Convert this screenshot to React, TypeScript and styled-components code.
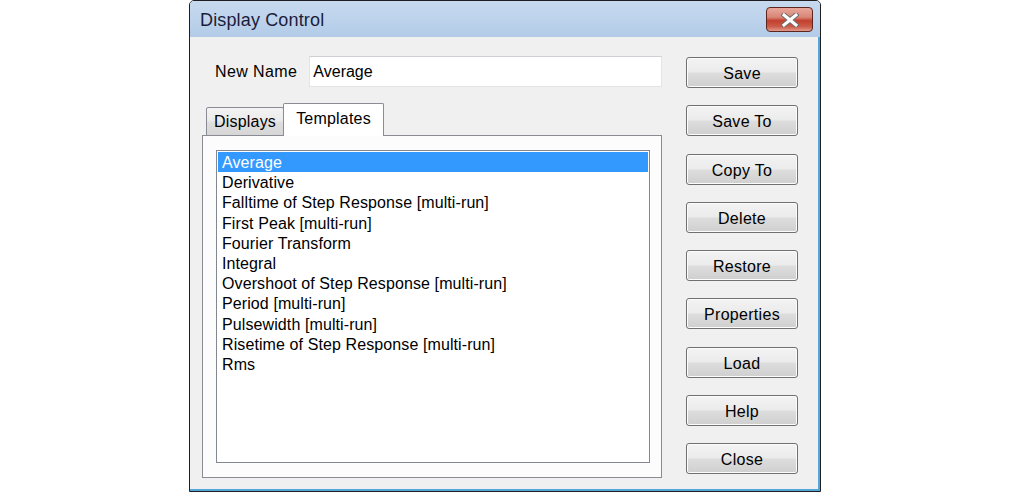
import styled, { createGlobalStyle } from 'styled-components'

const GlobalStyle = createGlobalStyle`
  html, body {
    margin: 0;
    padding: 0;
    background: #ffffff;
  }
  body {
    font-family: "Liberation Sans", Arial, sans-serif;
  }
`

const Page = styled.div`
  display: flex;
  justify-content: center;
`

const Window = styled.div`
  width: 632px;
  height: 492px;
  box-sizing: border-box;
  border: 1px solid #1f1f1f;
  border-radius: 5px 5px 0 0;
  display: flex;
  flex-direction: column;
  overflow: hidden;
  background: #f0f0f0;
`

const TitleBar = styled.div`
  height: 36px;
  flex: none;
  display: flex;
  align-items: center;
  justify-content: space-between;
  padding: 0 7px 0 10px;
  background: linear-gradient(180deg, #c6d9ee 0%, #bdd3ec 50%, #b3cbe7 100%);
`

const Title = styled.span`
  font-size: 18px;
  letter-spacing: 0.15px;
  color: #1c1c3a;
  padding-top: 2px;
`

const CloseButton = styled.div`
  width: 47px;
  height: 25px;
  box-sizing: border-box;
  border: 1px solid #5e241e;
  border-radius: 4px;
  background: linear-gradient(180deg, #e8a89c 0%, #d98676 40%, #c2402f 55%, #cc5a48 80%, #e19a8b 100%);
  display: flex;
  align-items: center;
  justify-content: center;
  margin-top: 1px;
`

const Body = styled.div`
  flex: 1;
  display: flex;
  gap: 24px;
  padding: 19px 20px 0 12px;
  border-right: 2px solid #54a6d8;
  border-bottom: 2px solid #54a6d8;
`

const LeftColumn = styled.div`
  width: 460px;
  display: flex;
  flex-direction: column;
`

const NameRow = styled.div`
  display: flex;
  align-items: center;
  gap: 12px;
  padding-left: 13px;
`

const Label = styled.span`
  font-size: 16px;
  letter-spacing: 0.4px;
  color: #000;
`

const TextInput = styled.div`
  flex: 1;
  height: 31px;
  box-sizing: border-box;
  background: #ffffff;
  border: 1px solid #e2e4e7;
  border-top-color: #cdd0d4;
  font-size: 16px;
  color: #000;
  padding: 0 3px;
  display: flex;
  align-items: center;
`

const TabRow = styled.div`
  display: flex;
  align-items: flex-end;
  margin-top: 16px;
  padding-left: 4px;
  position: relative;
  z-index: 1;
  margin-bottom: -1px;
`

const Tab = styled.div<{ $active?: boolean }>`
  box-sizing: border-box;
  font-size: 16px;
  letter-spacing: 0.2px;
  color: #000;
  display: flex;
  align-items: center;
  justify-content: center;
  border: 1px solid #898c95;
  border-radius: 2px 2px 0 0;
  ${(p) =>
    p.$active
      ? `
    height: 33px;
    width: 101px;
    background: #ffffff;
    border-bottom: none;
    margin-left: -1px;
    padding-bottom: 2px;
  `
      : `
    height: 29px;
    width: 78px;
    background: linear-gradient(180deg, #f3f3f3 0%, #ebebeb 45%, #dedede 55%, #d6d6d6 100%);
    padding-top: 0;
  `}
`

const TabPanel = styled.div`
  height: 343px;
  box-sizing: border-box;
  border: 1px solid #898c95;
  background: #fcfcfc;
  padding: 14px 11px 14px 13px;
  display: flex;
`

const ListBox = styled.div`
  flex: 1;
  box-sizing: border-box;
  border: 1px solid #828790;
  background: #ffffff;
  padding: 1px;
`

const ListItem = styled.div<{ $selected?: boolean }>`
  height: 20.2px;
  line-height: 22px;
  font-size: 16px;
  letter-spacing: 0.1px;
  padding-left: 4px;
  white-space: nowrap;
  overflow: hidden;
  color: ${(p) => (p.$selected ? '#ffffff' : '#000000')};
  background: ${(p) => (p.$selected ? '#3399ff' : 'transparent')};
`

const ButtonColumn = styled.div`
  width: 112px;
  display: flex;
  flex-direction: column;
  gap: 17.25px;
  padding-top: 1px;
`

const Button = styled.div`
  height: 31px;
  box-sizing: border-box;
  border: 1px solid #707070;
  border-radius: 3px;
  background: linear-gradient(180deg, #f3f3f3 0%, #ebebeb 48%, #dddddd 52%, #cfcfcf 100%);
  box-shadow: inset 0 0 0 1px #fcfcfc;
  font-size: 16px;
  letter-spacing: 0.3px;
  color: #000;
  display: flex;
  align-items: center;
  justify-content: center;
  padding-top: 3px;
`

const templates = [
  'Average',
  'Derivative',
  'Falltime of Step Response [multi-run]',
  'First Peak [multi-run]',
  'Fourier Transform',
  'Integral',
  'Overshoot of Step Response [multi-run]',
  'Period [multi-run]',
  'Pulsewidth [multi-run]',
  'Risetime of Step Response [multi-run]',
  'Rms',
]

const buttons = ['Save', 'Save To', 'Copy To', 'Delete', 'Restore', 'Properties', 'Load', 'Help', 'Close']

const App = () => {
  return (
    <Page>
      <GlobalStyle />
      <Window>
        <TitleBar>
          <Title>Display Control</Title>
          <CloseButton>
            <svg width="18" height="14" viewBox="0 0 18 14">
              <path
                d="M3 2 L15 12 M15 2 L3 12"
                stroke="#6e6e6e"
                strokeWidth="5"
                strokeLinecap="square"
              />
              <path
                d="M3 2 L15 12 M15 2 L3 12"
                stroke="#ffffff"
                strokeWidth="3"
                strokeLinecap="square"
              />
            </svg>
          </CloseButton>
        </TitleBar>
        <Body>
          <LeftColumn>
            <NameRow>
              <Label>New Name</Label>
              <TextInput>Average</TextInput>
            </NameRow>
            <TabRow>
              <Tab>Displays</Tab>
              <Tab $active>Templates</Tab>
            </TabRow>
            <TabPanel>
              <ListBox>
                {templates.map((t, i) => (
                  <ListItem key={t} $selected={i === 0}>
                    {t}
                  </ListItem>
                ))}
              </ListBox>
            </TabPanel>
          </LeftColumn>
          <ButtonColumn>
            {buttons.map((b) => (
              <Button key={b}>{b}</Button>
            ))}
          </ButtonColumn>
        </Body>
      </Window>
    </Page>
  )
}

export default App
